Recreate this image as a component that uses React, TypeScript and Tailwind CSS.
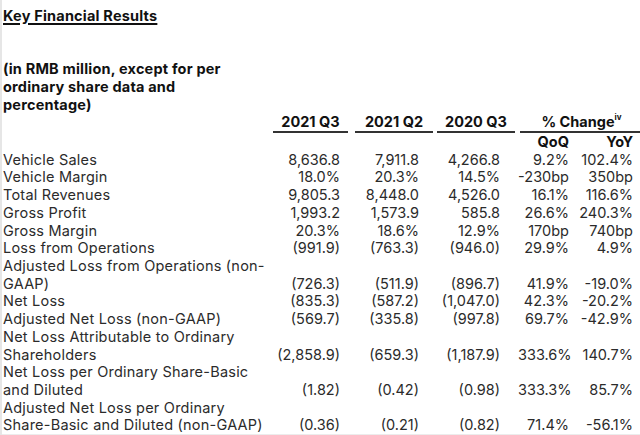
import React from 'react';

type Row = {
    label: string[];
    values: string[];
};

const rows: Row[] = [
    { label: ['Vehicle Sales'], values: ['8,636.8', '7,911.8', '4,266.8', '9.2%', '102.4%'] },
    { label: ['Vehicle Margin'], values: ['18.0%', '20.3%', '14.5%', '-230bp', '350bp'] },
    { label: ['Total Revenues'], values: ['9,805.3', '8,448.0', '4,526.0', '16.1%', '116.6%'] },
    { label: ['Gross Profit'], values: ['1,993.2', '1,573.9', '585.8', '26.6%', '240.3%'] },
    { label: ['Gross Margin'], values: ['20.3%', '18.6%', '12.9%', '170bp', '740bp'] },
    { label: ['Loss from Operations'], values: ['(991.9)', '(763.3)', '(946.0)', '29.9%', '4.9%'] },
    {
        label: ['Adjusted Loss from Operations (non-', 'GAAP)'],
        values: ['(726.3)', '(511.9)', '(896.7)', '41.9%', '-19.0%'],
    },
    { label: ['Net Loss'], values: ['(835.3)', '(587.2)', '(1,047.0)', '42.3%', '-20.2%'] },
    { label: ['Adjusted Net Loss (non-GAAP)'], values: ['(569.7)', '(335.8)', '(997.8)', '69.7%', '-42.9%'] },
    {
        label: ['Net Loss Attributable to Ordinary', 'Shareholders'],
        values: ['(2,858.9)', '(659.3)', '(1,187.9)', '333.6%', '140.7%'],
    },
    {
        label: ['Net Loss per Ordinary Share-Basic', 'and Diluted'],
        values: ['(1.82)', '(0.42)', '(0.98)', '333.3%', '85.7%'],
    },
    {
        label: ['Adjusted Net Loss per Ordinary', 'Share-Basic and Diluted (non-GAAP)'],
        values: ['(0.36)', '(0.21)', '(0.82)', '71.4%', '-56.1%'],
    },
];

// right padding per value column so the numbers line up like the source
const valuePad = ['pr-[13px]', 'pr-[16px]', 'pr-[18px]', 'pr-[8px]', 'pr-[10px]'];

const grid = 'grid grid-cols-[270px_80px_82px_83px_59px_66px]';

const App: React.FC = () => {
    return (
        <div
            className="w-[640px] h-[435px] bg-white border-l-2 border-[#e6e6e6] flex flex-col overflow-hidden text-[#2b2b2b] text-[14.5px] leading-[17.72px]"
            style={{ fontFamily: 'Inter, Lato, sans-serif' }}
        >
            <div className="flex-1 pt-[7px] pl-px">
                <h1 className="font-bold text-[#111] tracking-[0.2px] underline underline-offset-2 decoration-[1.5px]">
                    Key Financial Results
                </h1>
                <div className="h-[35.4px]"></div>
                <p className="font-bold text-[#111] tracking-[0.2px]">
                    (in RMB million, except for per
                    <br />
                    ordinary share data and
                    <br />
                    percentage)
                </p>

                {/* column headings */}
                <div className={`${grid} font-bold text-[#111]`}>
                    <div></div>
                    <div className="mr-[5px] text-center border-b-2 border-[#333]">2021 Q3</div>
                    <div className="ml-[2px] mr-[2px] text-center border-b-2 border-[#333]">2021 Q2</div>
                    <div className="ml-[2px] mr-[3px] text-center border-b-2 border-[#333]">2020 Q3</div>
                    <div className="col-span-2 ml-[2px] text-center border-b-2 border-[#333]">
                        % Change<sup className="text-[8px] align-[3px] leading-none">iv</sup>
                    </div>
                </div>
                <div className={`${grid} font-bold text-[#111]`}>
                    <div className="col-span-4"></div>
                    <div className="text-right pr-[8px]">QoQ</div>
                    <div className="text-right pr-[10px]">YoY</div>
                </div>

                {rows.map((row) => (
                    <div key={row.label.join(' ')} className={`${grid} items-end`}>
                        <div className="whitespace-nowrap tracking-[0.22px]">
                            {row.label.map((line, i) => (
                                <div key={i}>{line}</div>
                            ))}
                        </div>
                        {row.values.map((v, i) => (
                            <div key={i} className={`text-right ${valuePad[i]}`}>
                                {v}
                            </div>
                        ))}
                    </div>
                ))}
            </div>
            <div className="h-[3px] bg-[#ececec]"></div>
        </div>
    );
};

export default App;
